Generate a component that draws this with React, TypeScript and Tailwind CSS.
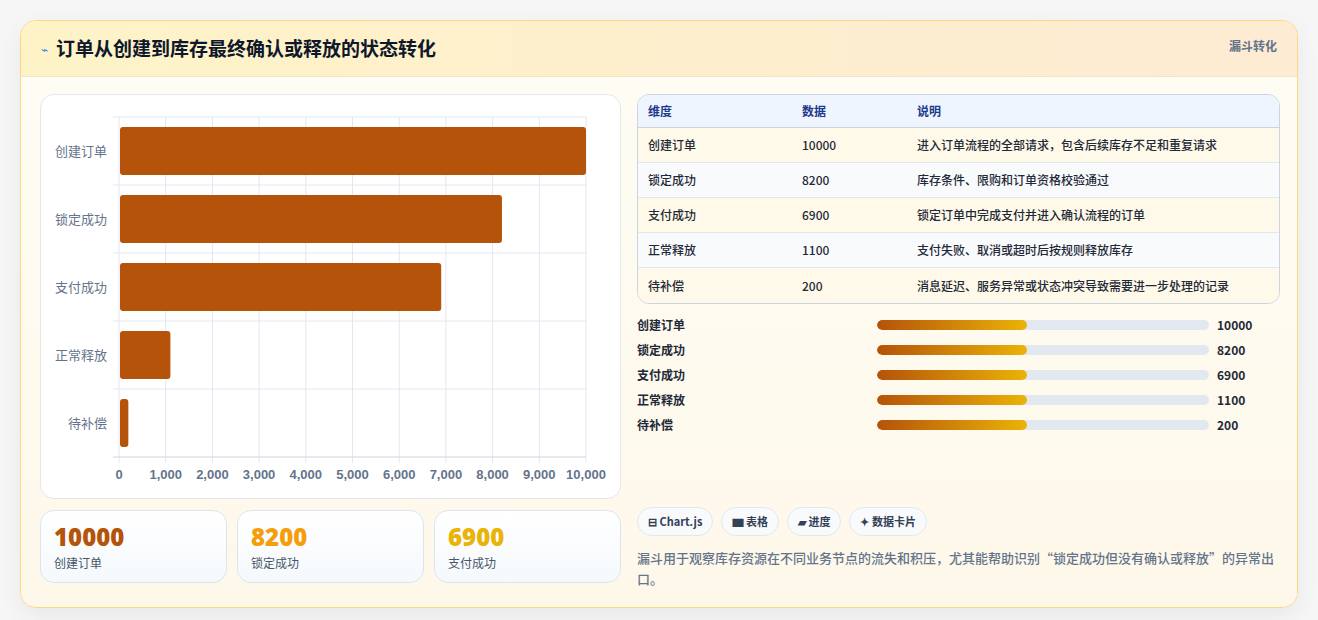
import React from "react";

const rows = [
  { k: "创建订单", v: 10000, d: "进入订单流程的全部请求，包含后续库存不足和重复请求" },
  { k: "锁定成功", v: 8200, d: "库存条件、限购和订单资格校验通过" },
  { k: "支付成功", v: 6900, d: "锁定订单中完成支付并进入确认流程的订单" },
  { k: "正常释放", v: 1100, d: "支付失败、取消或超时后按规则释放库存" },
  { k: "待补偿", v: 200, d: "消息延迟、服务异常或状态冲突导致需要进一步处理的记录" },
];

function Chart() {
  // card-relative coords: plot x 78..545, y 22..362
  const x0 = 78, x1 = 545, y0 = 22, y1 = 362;
  const w = x1 - x0;
  const band = (y1 - y0) / 5;
  return (
    <svg width="580" height="403" className="block">
      {Array.from({ length: 11 }).map((_, i) => {
        const x = x0 + (w * i) / 10;
        return <line key={i} x1={x} x2={x} y1={y0} y2={y1 + 6} stroke="#e2e8f0" strokeWidth="1" />;
      })}
      {Array.from({ length: 6 }).map((_, i) => {
        const y = y0 + band * i;
        return <line key={i} x1={x0 - 6} x2={x1} y1={y} y2={y} stroke={i === 5 ? "#cbd5e1" : "#e2e8f0"} strokeWidth="1" />;
      })}
      {rows.map((r, i) => {
        const cy = y0 + band * i + band / 2;
        return (
          <g key={r.k}>
            <rect x={x0 + 1} y={cy - 24} width={Math.max((w * r.v) / 10000 - 1, 8)} height={48} rx="3" fill="#b45309" />
            <text x={x0 - 12} y={cy + 5} textAnchor="end" fontSize="13" fill="#64748b" fontFamily="'Noto Sans CJK SC', sans-serif">{r.k}</text>
          </g>
        );
      })}
      {Array.from({ length: 11 }).map((_, i) => (
        <text key={i} x={x0 + (w * i) / 10} y={384} textAnchor="middle" fontSize="13" fontWeight="bold" fill="#64748b" fontFamily="'Liberation Sans', sans-serif">
          {(i * 1000).toLocaleString("en-US")}
        </text>
      ))}
    </svg>
  );
}

export default function App() {
  return (
    <div className="min-h-[620px] bg-[#f6f6f6] pt-[20px] px-[20px] pb-[20px]" style={{ fontFamily: "'Noto Sans CJK SC', 'Noto Sans', sans-serif" }}>
      <div className="w-[1278px] rounded-[16px] border border-[#fcd980] bg-[#fef9ec] overflow-hidden shadow-[0_8px_24px_rgba(0,0,0,0.06)]">
        <div className="h-[56px] flex items-center justify-between px-[20px] bg-gradient-to-r from-[#fef3c7] to-[#fdebd3] border-b border-[#f1e6cc]">
          <div className="flex items-center gap-[8px]">
            <span className="text-[12px] text-[#3b82f6]">⌁</span>
            <span className="text-[19px] font-bold text-[#0f172a]">订单从创建到库存最终确认或释放的状态转化</span>
          </div>
          <span className="text-[12px] font-bold text-[#64748b] self-start mt-[16px]">漏斗转化</span>
        </div>
        <div className="flex gap-[16px] px-[19px] pt-[17px] pb-[18px] bg-gradient-to-b from-[#fefcf3] to-[#fef8ea]">
          <div className="w-[581px] flex flex-col gap-[11px]">
            <div className="rounded-[14px] border border-[#e5e7eb] bg-white overflow-hidden">
              <Chart />
            </div>
            <div className="grid grid-cols-3 gap-[10px]">
              {[["10000", "创建订单", "text-[#b45309]"], ["8200", "锁定成功", "text-[#f59e0b]"], ["6900", "支付成功", "text-[#eab308]"]].map(([v, l, c]) => (
                <div key={l} className="h-[73px] rounded-[14px] border border-[#dbe5f0] bg-gradient-to-b from-white to-[#f5f9fc] px-[13px] pt-[10px]">
                  <div className={`text-[24px] leading-[32px] font-extrabold ${c}`} style={{ fontFamily: "'Open Sans', sans-serif" }}>{v}</div>
                  <div className="text-[12px] text-[#475569] mt-[1px]">{l}</div>
                </div>
              ))}
            </div>
          </div>
          <div className="flex-1 flex flex-col">
            <div className="w-[643px] rounded-[12px] border border-[#cbd5e1] overflow-hidden text-[12px]">
              <div className="grid grid-cols-[154px_115px_1fr] h-[33px] items-center px-[10px] bg-[#eef5ff] font-bold text-[#1e3a8a] border-b border-[#cbd5e1]">
                <span>维度</span><span>数据</span><span>说明</span>
              </div>
              {rows.map((r, i) => (
                <div key={r.k} className={`grid grid-cols-[154px_115px_1fr] h-[35px] items-center px-[10px] font-medium text-[#1f2937] ${i % 2 === 0 ? "bg-[#fef9e8]" : "bg-[#f8fafc]"} ${i < 4 ? "border-b border-[#e2e8f0]" : ""}`}>
                  <span>{r.k}</span><span>{r.v}</span><span>{r.d}</span>
                </div>
              ))}
            </div>
            <div className="flex flex-col gap-[5px] mt-[11px] text-[12px] font-bold text-[#1f2937]">
              {rows.map((r) => (
                <div key={r.k} className="h-[20px] flex items-center">
                  <span className="w-[240px]">{r.k}</span>
                  <div className="w-[332px] h-[10px] rounded-full bg-[#e2e8f0] overflow-hidden">
                    <div className="w-[150px] h-full rounded-full bg-gradient-to-r from-[#b45309] to-[#eab308]" />
                  </div>
                  <span className="ml-[8px]">{r.v}</span>
                </div>
              ))}
            </div>
            <div className="flex gap-[8px] mt-[72px]">
              {["⊟ Chart.js", "▆ 表格", "▰ 进度", "✦ 数据卡片"].map((c) => (
                <span key={c} className="h-[29px] px-[10px] flex items-center rounded-full border border-[#e2e8f0] bg-[#f8fafc] text-[11px] font-bold text-[#334155]">{c}</span>
              ))}
            </div>
            <p className="mt-[11px] text-[13px] leading-[21px] font-medium text-[#64748b]">
              漏斗用于观察库存资源在不同业务节点的流失和积压，尤其能帮助识别“锁定成功但没有确认或释放”的异常出口。
            </p>
          </div>
        </div>
      </div>
    </div>
  );
}
